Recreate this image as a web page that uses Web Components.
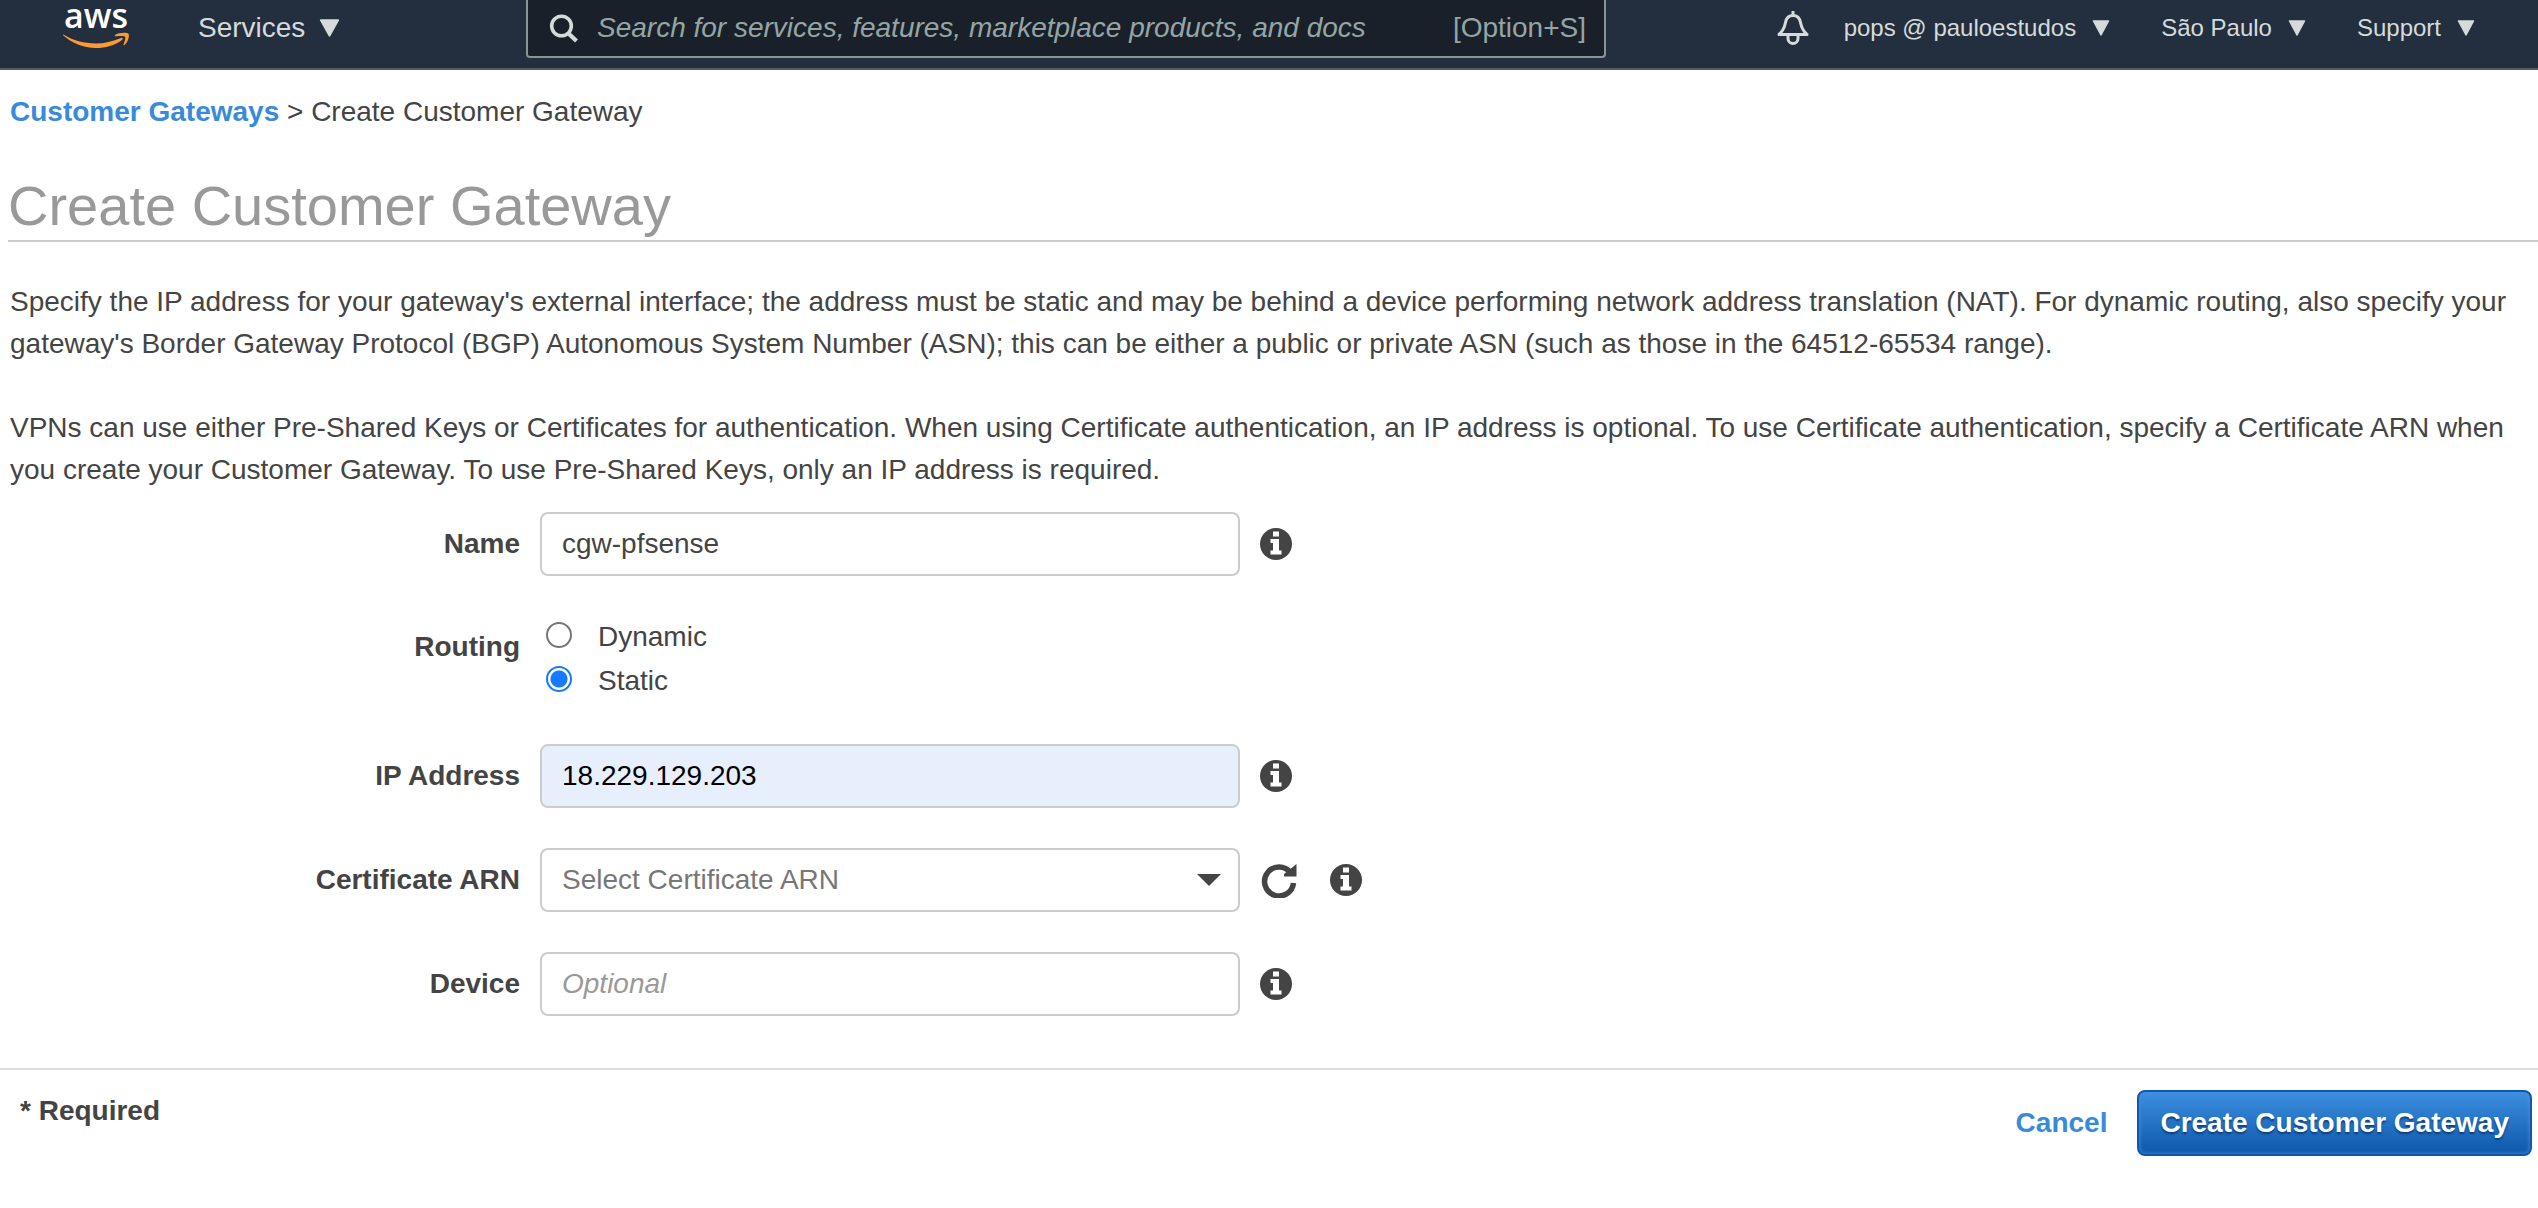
<!DOCTYPE html>
<html lang="en">
<head>
<meta charset="utf-8">
<title>Create Customer Gateway</title>
<style>
  body {
    margin: 0;
    background: #fff;
    color: #444;
    font: 28px/42px "Liberation Sans", Arial, sans-serif;
  }
</style>
</head>
<body>
<gateway-page></gateway-page>

<script>
const define = (name, html, setup) => {
  const tpl = document.createElement('template');
  tpl.innerHTML = '<style>*{box-sizing:border-box}</style>' + html;
  customElements.define(name, class extends HTMLElement {
    constructor() {
      super();
      this.attachShadow({ mode: 'open' }).append(tpl.content.cloneNode(true));
    }
    connectedCallback() { if (setup) setup(this, this.shadowRoot); }
  });
};

define('nav-menu', `
<style>
  :host { display: block; }
  button { display: flex; align-items: center; gap: 16px; padding: 0; border: 0; background: none;
    color: #d5dbdb; font: inherit; white-space: nowrap; cursor: pointer; }
  svg { width: 18px; height: 16px; }
  :host([large]) button { gap: 14px; }
  :host([large]) svg { width: 21px; height: 18px; }
</style>
<button type="button"><slot></slot><svg viewBox="0 0 18 16" preserveAspectRatio="none" aria-hidden="true"><path d="M1.5 1h15L9 15z" fill="#d5dbdb" stroke="#d5dbdb" stroke-width="1.5" stroke-linejoin="round"/></svg></button>`);

define('nav-search', `
<style>
  :host { display: block; }
  label { display: flex; align-items: center; height: 58px; padding: 0 18px 0 21px;
    background: #1a2029; border: 2px solid #879596; border-top: 0; border-radius: 0 0 4px 4px; color: #95a5a6; }
  svg { width: 30px; height: 30px; flex: none; margin-right: 18px; }
  input { flex: 1; min-width: 0; height: 56px; padding: 0; border: 0; outline: 0; background: none;
    color: #fff; font: inherit; }
  input::placeholder { color: #95a5a6; font-style: italic; opacity: 1; }
</style>
<label>
  <svg viewBox="0 0 30 30" fill="none" stroke="#d5dbdb" stroke-width="3.6" aria-hidden="true"><circle cx="12.5" cy="13" r="9.8"/><path d="M19 20l8.5 8" stroke-width="4.2"/></svg>
  <input type="search" aria-label="Search" placeholder="Search for services, features, marketplace products, and docs">
  <span>[Option+S]</span>
</label>`);

define('top-nav', `
<style>
  :host { display: flex; height: 70px; padding: 0 63px; background: #232f3e;
    border-bottom: 2px solid #545b64; color: #d5dbdb; }
  .left { display: flex; flex: 0 0 463px; gap: 69px; height: 56px; align-items: center; }
  .logo { display: block; width: 66px; height: 56px; }
  .logo svg { display: block; width: 66px; height: 56px; overflow: visible; }
  nav-search { flex: 0 1 1080px; }
  .right { display: flex; align-items: center; height: 56px; margin-left: auto; gap: 51px; font-size: 24px; }
  .bell { display: flex; padding: 0; border: 0; background: none; margin-right: -17px; }
  .bell svg { width: 34px; height: 34px; }
</style>
<div class="left">
  <a class="logo" href="#" aria-label="AWS home"><svg viewBox="0 0 66 56">
    <text x="33" y="28" text-anchor="middle" font-family="Open Sans, sans-serif" font-size="34" font-weight="600" fill="#fff">aws</text>
    <path fill="#f93" d="M.3 34.600c9.700 6 20.700 8.900 32.700 8.900 8 0 17-2 25-5.500 1.500-.6 2.500.8 1 2C52 45.500 42 48 33 48 20 48 9 43 .6 35.800c-.8-.8-.8-1.500-.3-1.200z"/>
    <path fill="#f93" d="M52 35c3-2.500 12-3 13.500-1.300 1.300 2-.5 8.500-4 11.300-.8.600-1.400.2-1-.6 1-2.400 2.400-6.400 1.600-7.600-.9-1.200-5.500-.8-9-.5-1.200.1-1.800-.8-1.100-1.300z"/>
  </svg></a>
  <nav-menu large>Services</nav-menu>
</div>
<nav-search></nav-search>
<div class="right">
  <button class="bell" type="button" aria-label="Notifications"><svg viewBox="0 0 34 34" fill="none" stroke="#d5dbdb" stroke-width="3" stroke-linejoin="round" aria-hidden="true"><path d="M17 0v4M3 23.500c4-3.500 5.500-7 6.500-12C10.300 7 13 4.500 17 4.500s6.700 2.500 7.500 7c1 5 2.500 8.500 6.500 12z"/><path d="M12 24v3.500a5 5 0 0 0 10 0V24"/></svg></button>
  <nav-menu>pops @ pauloestudos</nav-menu>
  <nav-menu>São Paulo</nav-menu>
  <nav-menu>Support</nav-menu>
</div>`);

define('info-icon', `
<style>
  :host { display: block; }
  button { display: block; padding: 0; border: 0; background: none; cursor: help; }
  svg { display: block; width: 32px; height: 32px; }
</style>
<button type="button" aria-label="More information"><svg viewBox="0 0 32 32" aria-hidden="true"><circle cx="16" cy="16" r="16" fill="#444"/><path fill="#fff" d="M13 3.500h6v5h-6zM10.500 11H19v11.500h2.500v4h-11v-4H13V15h-2.500z"/></svg></button>`);

define('refresh-icon', `
<style>
  :host { display: block; }
  button { display: block; padding: 0; border: 0; background: none; cursor: pointer; }
  svg { display: block; width: 38px; height: 36px; }
</style>
<button type="button" aria-label="Refresh"><svg viewBox="0 0 38 36" aria-hidden="true"><path d="M33.500 21A14.500 14.500 0 1 1 30.500 10.500" fill="none" stroke="#444" stroke-width="5.500"/><path d="M36.500 2v12.500H24V12z" fill="#444"/></svg></button>`);

const control = `
  .control { width: 100%; height: 64px; padding: 0 20px; border: 2px solid #ccc; border-radius: 8px;
    background: #fff; color: #444; font: inherit; outline: 0; }`;
const row = `
  :host { display: grid; grid-template-columns: 520px 700px auto; column-gap: 20px; align-items: center; }
  .label { text-align: right; font-weight: bold; }
  .extras { display: flex; align-items: center; gap: 32px; }`;

define('text-field', `
<style>${row}${control}
  .control::placeholder { color: #999; font-style: italic; opacity: 1; }
  :host([filled]) .control { background: #e8effc; color: #000; }
</style>
<label class="label" for="box"></label>
<input class="control" id="box" type="text">
<div class="extras"><info-icon></info-icon></div>`, (host, root) => {
  root.querySelector('label').textContent = host.getAttribute('label');
  const box = root.querySelector('input');
  box.value = host.getAttribute('value') || '';
  box.placeholder = host.getAttribute('placeholder') || '';
});

define('select-field', `
<style>${row}${control}
  .wrap { display: grid; align-items: center; }
  .wrap > * { grid-area: 1 / 1; }
  .control { appearance: none; color: #777; }
  svg { justify-self: end; width: 24px; height: 12px; margin-right: 19px; pointer-events: none; }
</style>
<label class="label" for="box"></label>
<div class="wrap"><select class="control" id="box"><option>Select Certificate ARN</option></select>
<svg viewBox="0 0 24 12" aria-hidden="true"><path d="M0 0h24L12 12z" fill="#444"/></svg></div>
<div class="extras"><refresh-icon></refresh-icon><info-icon></info-icon></div>`, (host, root) => {
  root.querySelector('label').textContent = host.getAttribute('label');
});

define('routing-field', `
<style>${row}
  :host { align-items: start; padding-bottom: 2px; }
  .label { padding-top: 10px; }
  .options { display: grid; gap: 2px; padding-left: 6px; }
  .options label { display: flex; gap: 26px; align-items: flex-start; }
  input { appearance: none; width: 26px; height: 26px; margin: 6px 0 0; border: 2px solid #767676; border-radius: 50%; background: #fff; }
  input:checked { border-color: #1679ff; background: radial-gradient(circle, #1679ff 8px, #fff 9px); }
</style>
<div class="label" id="t">Routing</div>
<div class="options" role="radiogroup" aria-labelledby="t">
  <label><input type="radio" name="routing">Dynamic</label>
  <label><input type="radio" name="routing" checked>Static</label>
</div>`);

define('form-footer', `
<style>
  :host { display: flex; justify-content: space-between; align-items: flex-start; padding: 20px 6px 0 20px;
    border-top: 2px solid #ddd; font-weight: bold; }
  .actions { display: flex; align-items: center; gap: 30px; }
  a { color: #388ada; text-decoration: none; }
  button { height: 66px; padding: 0 21px; border: 2px solid #0e59ac; border-radius: 8px; color: #fff; font: inherit;
    background: linear-gradient(#3d8fdf, #0d57aa); box-shadow: inset 0 0 4px #4794dd; text-shadow: 0 2px 2px #0a3f7c; cursor: pointer; }
</style>
<span>* Required</span>
<div class="actions"><a href="#">Cancel</a><button type="submit">Create Customer Gateway</button></div>`);

define('gateway-page', `
<style>
  :host { display: block; }
  .crumbs { padding: 21px 10px 0; }
  .crumbs a { color: #388ada; font-weight: bold; text-decoration: none; }
  h1 { margin: 40px 0 0 8px; padding-bottom: 1px; border-bottom: 2px solid #ccc; color: #999;
    font-size: 56px; line-height: 66px; font-weight: normal; }
  p { margin: 39px 6px 0 10px; }
  p + p { margin-top: 42px; }
  form { display: grid; gap: 40px; margin: 21px 0 52px; }
</style>
<top-nav></top-nav>
<nav class="crumbs"><a href="#">Customer Gateways</a> &gt; Create Customer Gateway</nav>
<main>
  <h1>Create Customer Gateway</h1>
  <p>Specify the IP address for your gateway's external interface; the address must be static and may be behind a device performing network address translation (NAT). For dynamic routing, also specify your gateway's Border Gateway Protocol (BGP) Autonomous System Number (ASN); this can be either a public or private ASN (such as those in the 64512-65534 range).</p>
  <p>VPNs can use either Pre-Shared Keys or Certificates for authentication. When using Certificate authentication, an IP address is optional. To use Certificate authentication, specify a Certificate ARN when you create your Customer Gateway. To use Pre-Shared Keys, only an IP address is required.</p>
  <form>
    <text-field label="Name" value="cgw-pfsense"></text-field>
    <routing-field></routing-field>
    <text-field label="IP Address" value="18.229.129.203" filled></text-field>
    <select-field label="Certificate ARN"></select-field>
    <text-field label="Device" placeholder="Optional"></text-field>
  </form>
</main>
<form-footer></form-footer>`);
</script>
</body>
</html>
